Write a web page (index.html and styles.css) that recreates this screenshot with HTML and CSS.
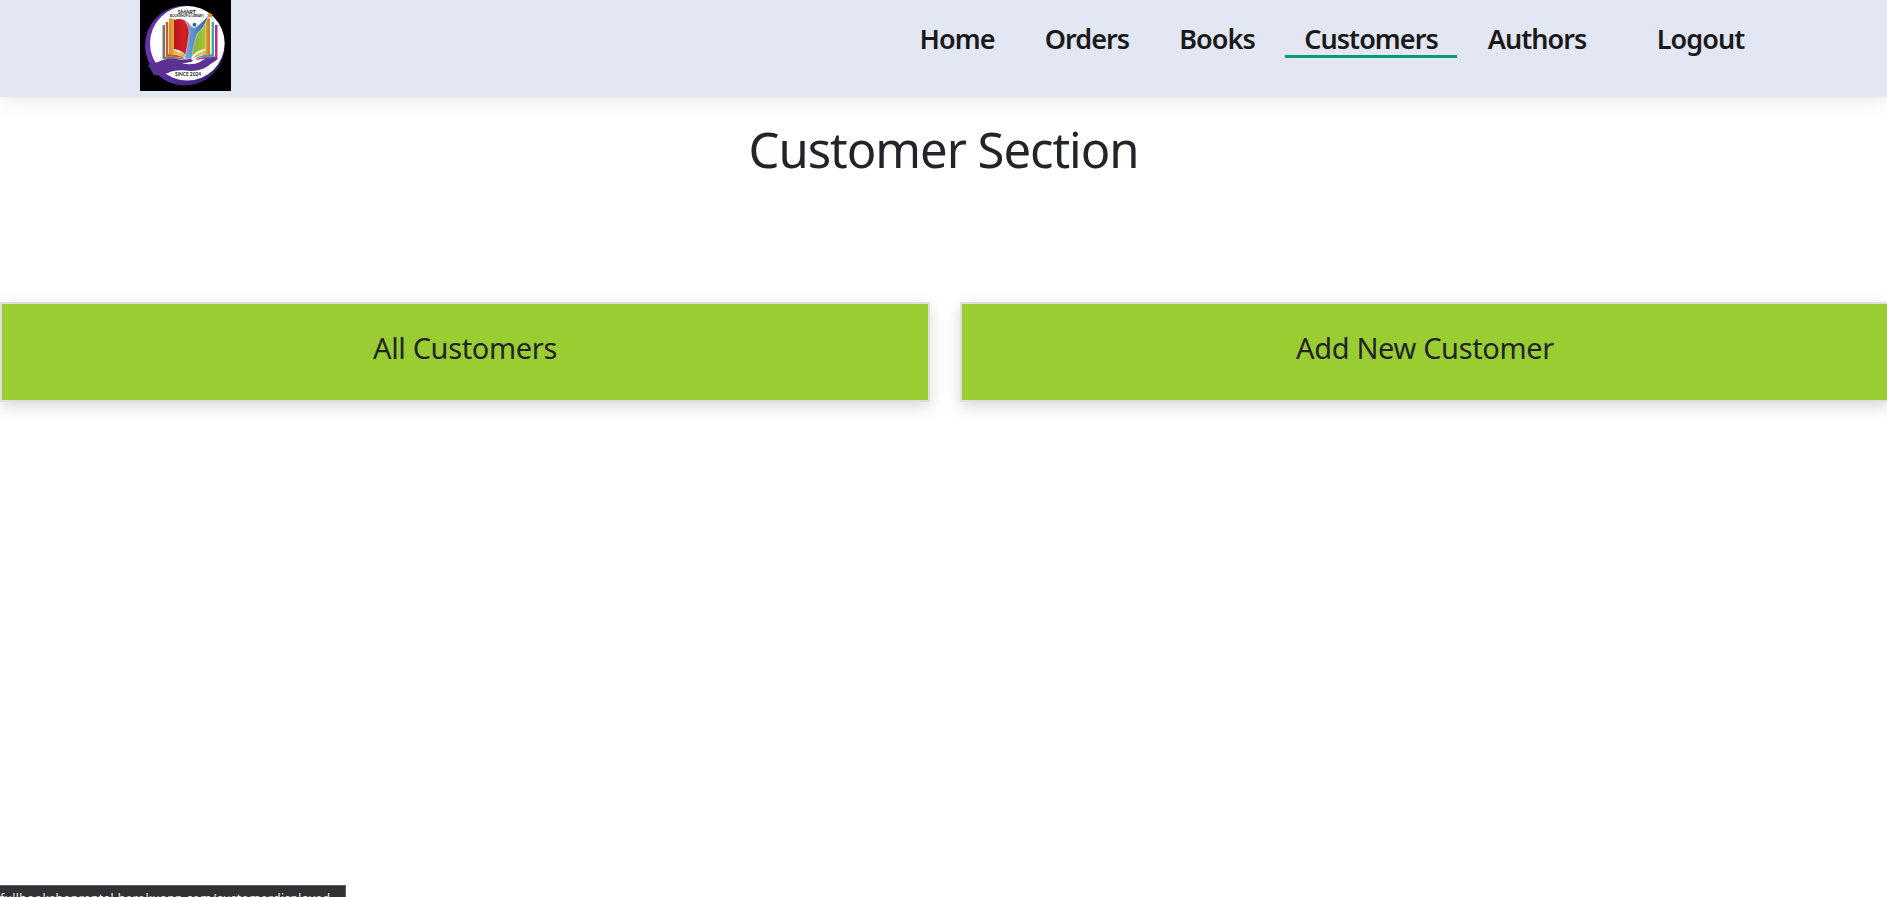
FILE: index.html
```html
<!DOCTYPE html>
<html lang="en">
<head>
<meta charset="utf-8">
<title>Customer Section</title>
<link rel="stylesheet" href="styles.css">
</head>
<body>
<header class="navbar">
  <a class="logo" href="#">
    <svg width="91" height="91" viewBox="0 0 91 91" role="img">
      <defs>
        <linearGradient id="ring" x1="0" x2="1"><stop offset="0" stop-color="#6534ad"/><stop offset="1" stop-color="#321b65"/></linearGradient>
        <linearGradient id="red" x1="0" x2="1"><stop offset="0" stop-color="#b3141c"/><stop offset=".5" stop-color="#d81f26"/><stop offset="1" stop-color="#a5161c"/></linearGradient>
        <linearGradient id="gold" x1="0" x2="1"><stop offset="0" stop-color="#d98a20"/><stop offset=".5" stop-color="#f7c668"/><stop offset="1" stop-color="#c97a14"/></linearGradient>
        <linearGradient id="leaf" x1="0" x2="1"><stop offset="0" stop-color="#7fae28"/><stop offset="1" stop-color="#a9c93f"/></linearGradient>
        <linearGradient id="blue" x1="0" x2="1"><stop offset="0" stop-color="#7aa9e0"/><stop offset="1" stop-color="#2c5fae"/></linearGradient>
      </defs>
      <rect width="91" height="91"/>
      <circle cx="45" cy="45.500" r="40" fill="url(#ring)"/>
      <circle cx="47.300" cy="43.300" r="37.300" fill="#fff"/>
      <path d="M22.500 25h2.500v32q12-1 22 3-13-2-24.500-1z" fill="#77747a"/>
      <path d="M25.800 22h2.400v32q11 0 18 5-9-3-20.400-2z" fill="#c65b2b"/>
      <path d="M29 18.500h5v32q9 1 14 8-8-4-19-4z" fill="url(#gold)"/>
      <path d="M34 20q8-3 14 3 3 2 5 7-5 9-5 28-5-8-14-9z" fill="url(#red)"/>
      <path d="M77.500 25h-2.500v32q-12-1-21 3 12-2 23.500-1z" fill="#b52c9b"/>
      <path d="M74 22h-2.400v32q-10 0-17 5 8-3 19.400-2z" fill="#3aa9a3"/>
      <path d="M70 18.500h-4.500v32q-8 1-12 8 6-4 16.500-4z" fill="url(#gold)"/>
      <path d="M65.500 20q-6 2-9 9-4 12-5 28 5-7 14-8z" fill="url(#leaf)"/>
      <path d="M45 21.500q5 5 9.500 6.500 8-5 14-13-4 13-11 18-4 11-6 26h-7q3-12 4-22 2-9-3.500-15.500" fill="url(#blue)" stroke="#fff" stroke-width=".4"/>
      <circle cx="54.500" cy="24.700" r="2" fill="#246cb6"/>
      <path d="M70 12l1 2 2.200.3-1.600 1.500.4 2.200-2-1-2 1 .4-2.200-1.600-1.500 2.200-.3z" fill="#d99020"/>
      <path d="M8 65l10-3q9-5 19-3 4 1.500 13 0 5 .5 1 3l-9 1.500q11 2 18-1.500 6-4.500 10-3.500 4-1.500 7-.5 2 1-5 5-9 8-21 8-16-2-23 2-7 3-14 2z" fill="#5c3194"/>
      <text class="logo-name" x="46.800" y="14.200" textLength="18">SMART</text>
      <text class="logo-sub" x="47" y="17.400" textLength="34" lengthAdjust="spacingAndGlyphs">BOOKSHOP &amp; LIBRARY</text>
      <text class="logo-since" x="48" y="76" textLength="26" lengthAdjust="spacingAndGlyphs">SINCE 2024</text>
    </svg>
  </a>
  <nav class="menu">
    <a class="item home" href="#">Home</a>
    <a class="item orders" href="#">Orders</a>
    <a class="item books" href="#">Books</a>
    <a class="item customers active" href="#">Customers</a>
    <a class="item authors" href="#">Authors</a>
    <a class="item logout" href="#">Logout</a>
  </nav>
</header>
<main>
  <h1 class="title">Customer Section</h1>
  <section class="cards">
    <a class="card all" href="#">All Customers</a>
    <a class="card add" href="#">Add New Customer</a>
  </section>
</main>
<div class="status">fullbookshoprental.herokuapp.com/customerdisplayed</div>
</body>
</html>
```
FILE: styles.css
```css
* { box-sizing: border-box; }
body {
  margin: 0;
  height: 897px;
  overflow: hidden;
  position: relative;
  background: #fff;
  color: #212529;
  font-family: "Segoe UI", "Noto Sans", "Open Sans", sans-serif;
}
a { color: inherit; text-decoration: none; }
.navbar {
  display: flex;
  justify-content: space-between;
  height: 97px;
  padding: 0 120px 0 140px;
  background: #e3e7f3;
  box-shadow: 0 2px 20px rgba(0, 0, 0, .1);
}
.logo { height: 91px; }
.logo svg { display: block; }
.logo text { font-family: Lato, sans-serif; text-anchor: middle; fill: #222; }
.logo-name { font-size: 5.5px; font-weight: 700; }
.logo-sub { font-size: 3.4px; font-weight: 700; }
.logo-since { font-size: 5.2px; font-weight: 700; }
.menu { display: flex; gap: 10px; padding-top: 20px; }
.item {
  height: 38px;
  line-height: 38px;
  text-align: center;
  white-space: nowrap;
  font-size: 27px;
  font-weight: 600;
  letter-spacing: -.95px;
  color: #1a1a1a;
}
.home { width: 116px; padding-left: 2px; }
.orders { width: 125px; padding-left: 1px; }
.books { width: 116px; }
.customers { width: 172px; }
.authors { width: 140px; }
.logout { width: 131px; margin-left: 19px; padding-right: 2px; }
.active { border-bottom: 3px solid #059c73; }
.title {
  margin: 18px 0 0;
  height: 68px;
  line-height: 68px;
  text-align: center;
  font-size: 49px;
  font-weight: 400;
  letter-spacing: -1.05px;
}
.cards {
  display: grid;
  grid-template-columns: 930px 930px;
  gap: 30px;
  margin-top: 119px;
}
.card {
  height: 100px;
  border: 2px solid #dedee2;
  padding-top: 24px;
  background: #9acd32;
  box-shadow: 0 5px 15px rgba(0, 0, 0, .15);
  text-align: center;
  font-size: 29px;
  line-height: 40px;
  letter-spacing: -.35px;
}
.status {
  position: absolute;
  left: 0;
  top: 885px;
  width: 346px;
  height: 24px;
  border: 1px solid #5c5e60;
  border-left: 0;
  background: #323235;
  color: #e8eaed;
  font-size: 12px;
  line-height: 26px;
  letter-spacing: .4px;
  white-space: nowrap;
}
```
